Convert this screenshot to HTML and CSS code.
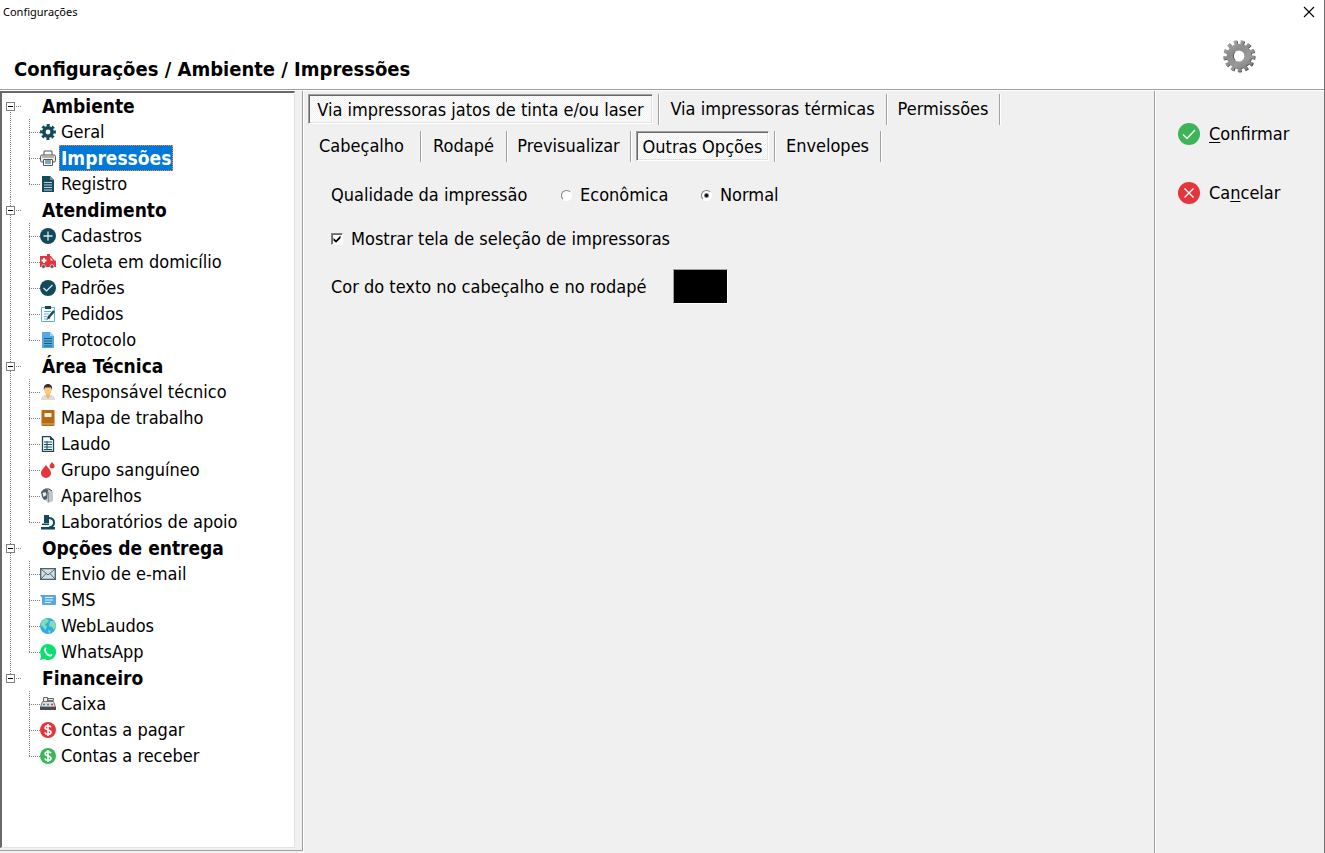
FILE: index.html
```html
<!DOCTYPE html>
<html lang="pt-BR">
<head>
<meta charset="utf-8">
<title>Configurações</title>
<link rel="stylesheet" href="styles.css">
</head>
<body>
<div class="window">
  <header class="header">
    <div class="titlebar">
      <span class="caption">Configurações</span>
      <button class="close" type="button" aria-label="Fechar"><svg width="12" height="12" viewBox="0 0 12 12"><path d="M1 1L11 11M11 1L1 11" stroke="#000" stroke-width="1.1" fill="none"/></svg></button>
    </div>
    <div class="heading">
      <h1>Configurações / Ambiente / Impressões</h1>
      <svg class="gear" width="34" height="34" viewBox="-17 -17 34 34">
        <defs>
          <linearGradient id="metal" gradientUnits="userSpaceOnUse" x1="-10" y1="-14" x2="8" y2="14"><stop offset="0" stop-color="#a6a6a6"/><stop offset=".35" stop-color="#8c8c8c"/><stop offset=".7" stop-color="#9a9a9a"/><stop offset="1" stop-color="#7c7c7c"/></linearGradient>
          <g id="teeth" fill="none">
            <circle r="8.800" stroke-width="7"/>
            <circle r="13.800" stroke-width="4" stroke-dasharray="3.300 3.370" transform="rotate(-2)"/>
          </g>
        </defs>
        <use href="#teeth" stroke="#444" x=".7" y=".6"/>
        <use href="#teeth" stroke="url(#metal)"/>
        <circle cx="-.2" cy="0" r="5.500" fill="#fff"/>
        <path d="M-4 4A5.600 5.600 0 0 1-4-4" fill="none" stroke="#555" stroke-width="1"/>
      </svg>
    </div>
  </header>

  <div class="body">
    <nav class="sidebar" aria-label="Seções">
      <ul class="tree">
        <li class="group">
          <div class="group-head"><button class="toggle" type="button" aria-label="Recolher Ambiente"></button><span>Ambiente</span></div>
          <ul>
            <li><svg viewBox="0 0 16 16"><circle cx="8" cy="8" r="4.2" fill="none" stroke="#12495c" stroke-width="3.6"/><circle cx="8" cy="8" r="6.6" fill="none" stroke="#12495c" stroke-width="2.6" stroke-dasharray="2.9 2.284" transform="rotate(-12.5 8 8)"/></svg><a href="#">Geral</a></li>
            <li><svg viewBox="0 0 16 16"><path d="M4 5V1h8v4" fill="#fff" stroke="#555" /><rect x=".5" y="5" width="15" height="7" rx="1.5" fill="#eee" stroke="#555"/><path d="M2 7h12" stroke="#777"/><path d="M3.5 9.500h9v6h-9z" fill="#fff" stroke="#555"/><path d="M5 11h6M5 13h6" stroke="#12495c"/></svg><a class="selected" href="#" aria-current="page">Impressões</a></li>
            <li><svg viewBox="0 0 16 16"><path d="M2 0h8l4 4v12H2z" fill="#12495c"/><path d="M10 0v4h4" fill="#6c919c"/><path d="M4 6.500h8M4 9h8M4 11.500h8M4 14h8" stroke="#c4d3d8"/></svg><a href="#">Registro</a></li>
          </ul>
        </li>
        <li class="group">
          <div class="group-head"><button class="toggle" type="button" aria-label="Recolher Atendimento"></button><span>Atendimento</span></div>
          <ul>
            <li><svg viewBox="0 0 16 16"><circle cx="8" cy="8" r="8" fill="#12495c"/><path d="M8 3.500v9M3.500 8h9" stroke="#dce8ec" stroke-width="1.3"/></svg><a href="#">Cadastros</a></li>
            <li><svg viewBox="0 0 16 16"><path d="M7 0h3v2H7z" fill="#e3353b"/><path d="M0 2h11l3 4 2 1v6H0z" fill="#e3353b"/><path d="M10.500 3.500l2.500 3h-2.500z" fill="#fff"/><path d="M4 4v5M1.500 6.500h5" stroke="#fff" stroke-width="1.800"/><g fill="#555" stroke="#fff" stroke-width=".6"><circle cx="3.500" cy="12.500" r="1.900"/><circle cx="12" cy="12.500" r="1.900"/></g></svg><a href="#">Coleta em domicílio</a></li>
            <li><svg viewBox="0 0 16 16"><circle cx="8" cy="8" r="8" fill="#12495c"/><path d="M3.500 8l3 3 6-6" fill="none" stroke="#e4edf0" stroke-width="1.200"/></svg><a href="#">Padrões</a></li>
            <li><svg viewBox="0 0 16 16"><path d="M1.500 1.500h13v14h-13z" fill="#fff" stroke="#62aedb"/><path d="M5 0h6v3H5z" fill="#12495c"/><path d="M4 5.500h7M4 8h5M4 10.500h3M4 13h3" stroke="#62aedb"/><path d="M14 5l-6 7" stroke="#12495c" stroke-width="2.400"/><path d="M8.500 10l-2 4 4-2z" fill="#12495c"/></svg><a href="#">Pedidos</a></li>
            <li><svg viewBox="0 0 16 16"><path d="M2 0h8l4 4v12H2z" fill="#55a9df"/><path d="M10 0v4h4" fill="#a4d2ef"/><path d="M4 6.500h8M4 9h8M4 11.500h8M4 14h8" stroke="#12607e"/></svg><a href="#">Protocolo</a></li>
          </ul>
        </li>
        <li class="group">
          <div class="group-head"><button class="toggle" type="button" aria-label="Recolher Área Técnica"></button><span>Área Técnica</span></div>
          <ul>
            <li><svg viewBox="0 0 16 16"><path d="M1 16c0-3.500 2-5 5-5h4c3 0 5 1.500 5 5z" fill="#dcdcdc"/><path d="M6 9h4v3l-2 3-2-3z" fill="#edb765"/><ellipse cx="8" cy="6" rx="3.700" ry="4.800" fill="#f9cb7c"/><path d="M4 6C3 1.500 6 0 8 0s5 1.500 4 6L11 3.500H5z" fill="#39322d"/></svg><a href="#">Responsável técnico</a></li>
            <li><svg viewBox="0 0 16 16"><rect x="1.500" width="13" height="16" rx="1" fill="#b36a15"/><rect x="4.500" y="3" width="7" height="4" fill="#fff0dc"/><path d="M2 14h12" stroke="#e2ad70"/></svg><a href="#">Mapa de trabalho</a></li>
            <li><svg viewBox="0 0 16 16"><path d="M2.500.5H10L13.500 4v11.500h-11z" fill="#fff" stroke="#12495c" stroke-width="1.300"/><path d="M10 0v4h4" fill="#12495c"/><path d="M4 6h8M4 8.500h8M4 11h8M4 13.500h8M7 5v9" stroke="#12495c"/></svg><a href="#">Laudo</a></li>
            <li><svg viewBox="0 0 16 16"><path d="M6 3c2 3 5 5 5 8a5 5 0 0 1-10 0c0-3 3-5 5-8z" fill="#e3353b"/><path d="M12 0c1 1.500 2.600 2.400 2.600 4a2.500 2.500 0 0 1-5 0c0-1.600 1.600-2.500 2.400-4z" fill="#e3353b"/></svg><a href="#">Grupo sanguíneo</a></li>
            <li><svg viewBox="0 0 16 16"><path d="M4 1l6 0 3 3v9l-5 2-3-3z" fill="#c3c7c9"/><path d="M1 4l3-3 4 1-1 9-3 1-2-3z" fill="#4c5b63"/><path d="M2.500 5l3-1 1 3-3 2z" fill="#e9eef0"/><path d="M8.500 4v10" stroke="#8d9396"/><path d="M5 1h4l3 2" stroke="#39464d" fill="none"/></svg><a href="#">Aparelhos</a></li>
            <li><svg viewBox="0 0 16 16"><path d="M4 1h5v8H4zM2 9.500h7V11H2zM1 13h14v2.500H1z" fill="#12495c"/><path d="M8.500 4c4 0 5.500 2 5.500 4.500S12.500 13 9 13.500" fill="none" stroke="#12495c" stroke-width="2"/></svg><a href="#">Laboratórios de apoio</a></li>
          </ul>
        </li>
        <li class="group">
          <div class="group-head"><button class="toggle" type="button" aria-label="Recolher Opções de entrega"></button><span>Opções de entrega</span></div>
          <ul>
            <li><svg viewBox="0 0 16 16"><path d="M.7 2.700h14.600v10.600H.7z" fill="#dbe1e3" stroke="#426570" stroke-width="1.300"/><path d="M1 3l7 6 7-6M1 13l5-5.500M15 13l-5-5.500" fill="none" stroke="#426570"/></svg><a href="#">Envio de e-mail</a></li>
            <li><svg viewBox="0 0 16 16"><path d="M0 3h15a1 1 0 0 1 1 1v8a1 1 0 0 1-1 1H3a1 1 0 0 1-1-1V6z" fill="#55a9df"/><path d="M5 5.500h8M5 8h8M5 10.500h6" stroke="#e5f4fc"/></svg><a href="#">SMS</a></li>
            <li><svg viewBox="0 0 16 16"><circle cx="8" cy="8" r="8" fill="#37a9de"/><path d="M2 3l4-2.500L9 2 7 5 5 6l2 3-2 3-2-3-2.500-2zM10 3l4 0 2 5-2 4-2-3-3-1zM8 12l3 1-2 3z" fill="#7be0b4"/></svg><a href="#">WebLaudos</a></li>
            <li><svg viewBox="0 0 16 16"><path d="M8 0a8 8 0 1 1-3.800 15L0 16l1.200-4A8 8 0 0 1 8 0z" fill="#0bdf71"/><path d="M5.500 4.500C4 6 6 9 7 10s3.500 2.500 4.500 1" fill="none" stroke="#fff" stroke-width="1.800" stroke-linecap="round"/></svg><a href="#">WhatsApp</a></li>
          </ul>
        </li>
        <li class="group">
          <div class="group-head"><button class="toggle" type="button" aria-label="Recolher Financeiro"></button><span>Financeiro</span></div>
          <ul>
            <li><svg viewBox="0 0 16 16"><path d="M3.500 6V1.500h4V6M8 4V2.500h5.500v2H8M11 4v2" fill="#eee" stroke="#666"/><path d="M2.500 5.500h11L15.500 11H.5z" fill="#ddd" stroke="#777"/><path d="M0 11h16v3H0z" fill="#4b4b4b"/><path d="M3 8.500h2M7 8.500h2" stroke="#3686a8" stroke-width="1.500"/><path d="M11 8.500h2" stroke="#e3353b" stroke-width="1.500"/></svg><a href="#">Caixa</a></li>
            <li><svg viewBox="0 0 16 16"><circle cx="8" cy="8" r="8" fill="#e3353b"/><path d="M11 5.200C10.500 4 9.300 3.700 8 3.700c-1.700 0-2.900.8-2.900 2.100C5.100 8.600 11 7.200 11 10.200c0 1.300-1.300 2.100-3 2.100-1.500 0-2.800-.6-3.100-1.900M8 2v12" fill="none" stroke="#fff" stroke-width="1.600"/></svg><a href="#">Contas a pagar</a></li>
            <li><svg viewBox="0 0 16 16"><circle cx="8" cy="8" r="8" fill="#3cb457"/><path d="M11 5.200C10.500 4 9.300 3.700 8 3.700c-1.700 0-2.900.8-2.900 2.100C5.100 8.600 11 7.200 11 10.200c0 1.300-1.300 2.100-3 2.100-1.500 0-2.800-.6-3.100-1.900M8 2v12" fill="none" stroke="#fff" stroke-width="1.600"/></svg><a href="#">Contas a receber</a></li>
          </ul>
        </li>
      </ul>
    </nav>

    <main class="content">
      <div class="tabs output-tabs" role="tablist">
        <div class="cell"><button type="button" role="tab" aria-selected="true">Via impressoras jatos de tinta e/ou laser</button></div>
        <div class="cell"><button type="button" role="tab" aria-selected="false">Via impressoras térmicas</button></div>
        <div class="cell"><button type="button" role="tab" aria-selected="false">Permissões</button></div>
      </div>
      <div class="tabs page-tabs" role="tablist">
        <div class="cell"><button type="button" role="tab" aria-selected="false">Cabeçalho</button></div>
        <div class="cell"><button type="button" role="tab" aria-selected="false">Rodapé</button></div>
        <div class="cell"><button type="button" role="tab" aria-selected="false">Previsualizar</button></div>
        <div class="cell"><button type="button" role="tab" aria-selected="true">Outras Opções</button></div>
        <div class="cell"><button type="button" role="tab" aria-selected="false">Envelopes</button></div>
      </div>
      <form class="options">
        <div class="quality" role="radiogroup" aria-labelledby="quality-label">
          <span id="quality-label">Qualidade da impressão</span>
          <label class="choice"><input type="radio" name="quality"><span>Econômica</span></label>
          <label class="choice"><input type="radio" name="quality" checked><span>Normal</span></label>
        </div>
        <label class="choice"><input type="checkbox" checked><span>Mostrar tela de seleção de impressoras</span></label>
        <div class="color-row"><label for="text-color">Cor do texto no cabeçalho e no rodapé</label><input id="text-color" type="color" value="#000000"></div>
      </form>
    </main>

    <aside class="actions">
      <button type="button"><svg width="22" height="22" viewBox="0 0 22 22"><circle cx="11" cy="11" r="11" fill="#3cb457"/><path d="M5 11.500l4 4 8-8.500" fill="none" stroke="#fff" stroke-width="1.400"/></svg><span><u>C</u>onfirmar</span></button>
      <button type="button"><svg width="22" height="22" viewBox="0 0 22 22"><circle cx="11" cy="11" r="11" fill="#e3353b"/><path d="M6.500 6.500l9 9M15.500 6.500l-9 9" fill="none" stroke="#fff" stroke-width="1.400"/></svg><span>Ca<u>n</u>celar</span></button>
    </aside>
  </div>
</div>
</body>
</html>
```
FILE: styles.css
```css
* { box-sizing: border-box; }

body {
  margin: 0;
  background: #f0f0f0;
  color: #000;
  font: 18px/26px "DejaVu Sans Condensed", Tahoma, "DejaVu Sans", sans-serif;
}

button {
  padding: 0;
  border: 0;
  background: none;
  color: inherit;
  font: inherit;
}

ul { margin: 0; padding: 0; list-style: none; }

.window {
  display: flex;
  flex-direction: column;
  min-height: 100vh;
  border-right: 1px solid #6e6e6e;
}

/* Title area */
.header {
  background: #fff;
  border-bottom: 1px solid #a0a0a0;
}

.titlebar {
  display: flex;
  justify-content: space-between;
  align-items: center;
  height: 24px;
  padding: 0 9px 0 3px;
}

.caption { font: 11px/16px "Noto Sans", sans-serif; }
.close { display: flex; }

.heading {
  display: flex;
  justify-content: space-between;
  height: 65px;
  padding: 15px 68px 0 14px;
}

h1 { margin: 17px 0 0; font-size: 20px; line-height: 26px; }

.body {
  display: flex;
  flex: 1;
  border-top: 1px solid #fff;
}

/* Section tree */
.sidebar {
  display: flex;
  flex: none;
  width: 303px;
  padding: 0 7px 2px 0;
  border-right: 1px solid #a0a0a0;
  border-bottom: 1px solid #a0a0a0;
  margin-bottom: 2px;
}

.tree {
  flex: 1;
  border: 2px solid;
  border-color: #696969 #e3e3e3 #e3e3e3 #696969;
  border-right-width: 1px;
  border-bottom-width: 1px;
  background: #fff;
}

.group {
  background: repeating-linear-gradient(#808080 0 1px, transparent 1px 2px) 8px 0 / 1px 100% no-repeat;
}
.group:first-child { background-position-y: 13px; }
.group:last-child { background-size: 1px 13px; }

.group-head {
  display: flex;
  align-items: center;
  height: 26px;
  padding-left: 4px;
  background: repeating-linear-gradient(90deg, #808080 0 1px, transparent 1px 2px) 14px 13px / 5px 1px no-repeat;
  font-size: 19px;
  font-weight: bold;
}

.toggle {
  width: 9px;
  height: 9px;
  margin-right: 27px;
  border: 1px solid #808080;
  background: linear-gradient(#000, #000) center / 5px 1px no-repeat #fff;
}

.group li {
  display: flex;
  align-items: center;
  height: 26px;
  padding-left: 38px;
  background:
    repeating-linear-gradient(#808080 0 1px, transparent 1px 2px) 27px 0 / 1px 100% no-repeat,
    repeating-linear-gradient(90deg, #808080 0 1px, transparent 1px 2px) 27px 13px / 11px 1px no-repeat;
}
.group li:last-child { background-size: 1px 13px, 11px 1px; }

.group li svg { flex: none; width: 16px; height: 16px; margin-right: 3px; }

.group a {
  padding: 0 1px;
  border: 1px solid transparent;
  color: inherit;
  line-height: 24px;
  text-decoration: none;
}

.group .selected {
  border: 1px dotted #ff8728;
  background: #0078d7;
  color: #fff;
  font-size: 19px;
  font-weight: bold;
}

/* Tabs and options */
.content {
  flex: 1;
  min-width: 0;
  padding-top: 3px;
  border-left: 1px solid #fff;
}

.tabs { display: grid; justify-content: start; height: 31px; margin-bottom: 6px; }
.output-tabs { grid-template-columns: 355px 228px 113px; }
.page-tabs { grid-template-columns: 117px 86px 124px 144px 106px; }

.cell {
  padding: 0 5px 0 4px;
  border-right: 1px solid #a0a0a0;
  box-shadow: 1px 0 #fff;
}
.cell + .cell { padding-left: 5px; }

.cell button {
  width: 100%;
  height: 30px;
  white-space: nowrap;
}

.cell [aria-selected="true"] {
  padding-top: 1px;
  border: 1px solid;
  border-color: #a0a0a0 #fff #fff #a0a0a0;
  background: repeating-conic-gradient(#fff 0 25%, #f0f0f0 0 50%) 0 0 / 2px 2px;
  box-shadow: inset 1px 1px #696969, inset -1px -1px #e3e3e3;
}

.options {
  display: flex;
  flex-direction: column;
  align-items: flex-start;
  padding: 14px 27px;
}

.quality { display: grid; grid-template-columns: 230px 140px auto; margin-bottom: 18px; }
.choice { display: flex; align-items: center; gap: 8px; }

input { appearance: none; margin: 0; }

input[type="radio"] {
  width: 11px;
  height: 11px;
  border: 1px solid;
  border-color: #808080 #fff #fff #808080;
  border-radius: 50%;
  background: #fff;
}
input[type="radio"]:checked { background: radial-gradient(circle, #000 0 1px, #fff 3px); }

input[type="checkbox"] {
  display: grid;
  place-items: center;
  width: 12px;
  height: 12px;
  border: 1px solid;
  border-color: #808080 #fff #fff #808080;
  background: #fff;
  box-shadow: inset 1px 1px #696969;
}
input[type="checkbox"]:checked::before {
  content: "";
  width: 8px;
  height: 8px;
  background: #000;
  clip-path: polygon(6% 38%, 38% 66%, 94% 6%, 94% 42%, 38% 98%, 6% 70%);
}

.color-row {
  display: grid;
  grid-template-columns: 327px auto;
  align-items: center;
  gap: 15px;
  margin-top: 17px;
}

input[type="color"] {
  width: 55px;
  height: 35px;
  padding: 0;
  border: 1px solid;
  border-color: #a0a0a0 #fff #fff #a0a0a0;
  background: #000;
}
input[type="color"]::-webkit-color-swatch-wrapper { padding: 0; }
input[type="color"]::-webkit-color-swatch { border: 0; }

/* Confirm and cancel */
.actions {
  display: flex;
  flex: none;
  flex-direction: column;
  align-items: flex-start;
  gap: 33px;
  width: 170px;
  padding: 30px 0 0 23px;
  border-left: 1px solid #a0a0a0;
  box-shadow: inset 1px 0 #fff;
}
.actions button { display: flex; align-items: center; gap: 9px; }
.actions u { text-underline-offset: 2px; }
```
